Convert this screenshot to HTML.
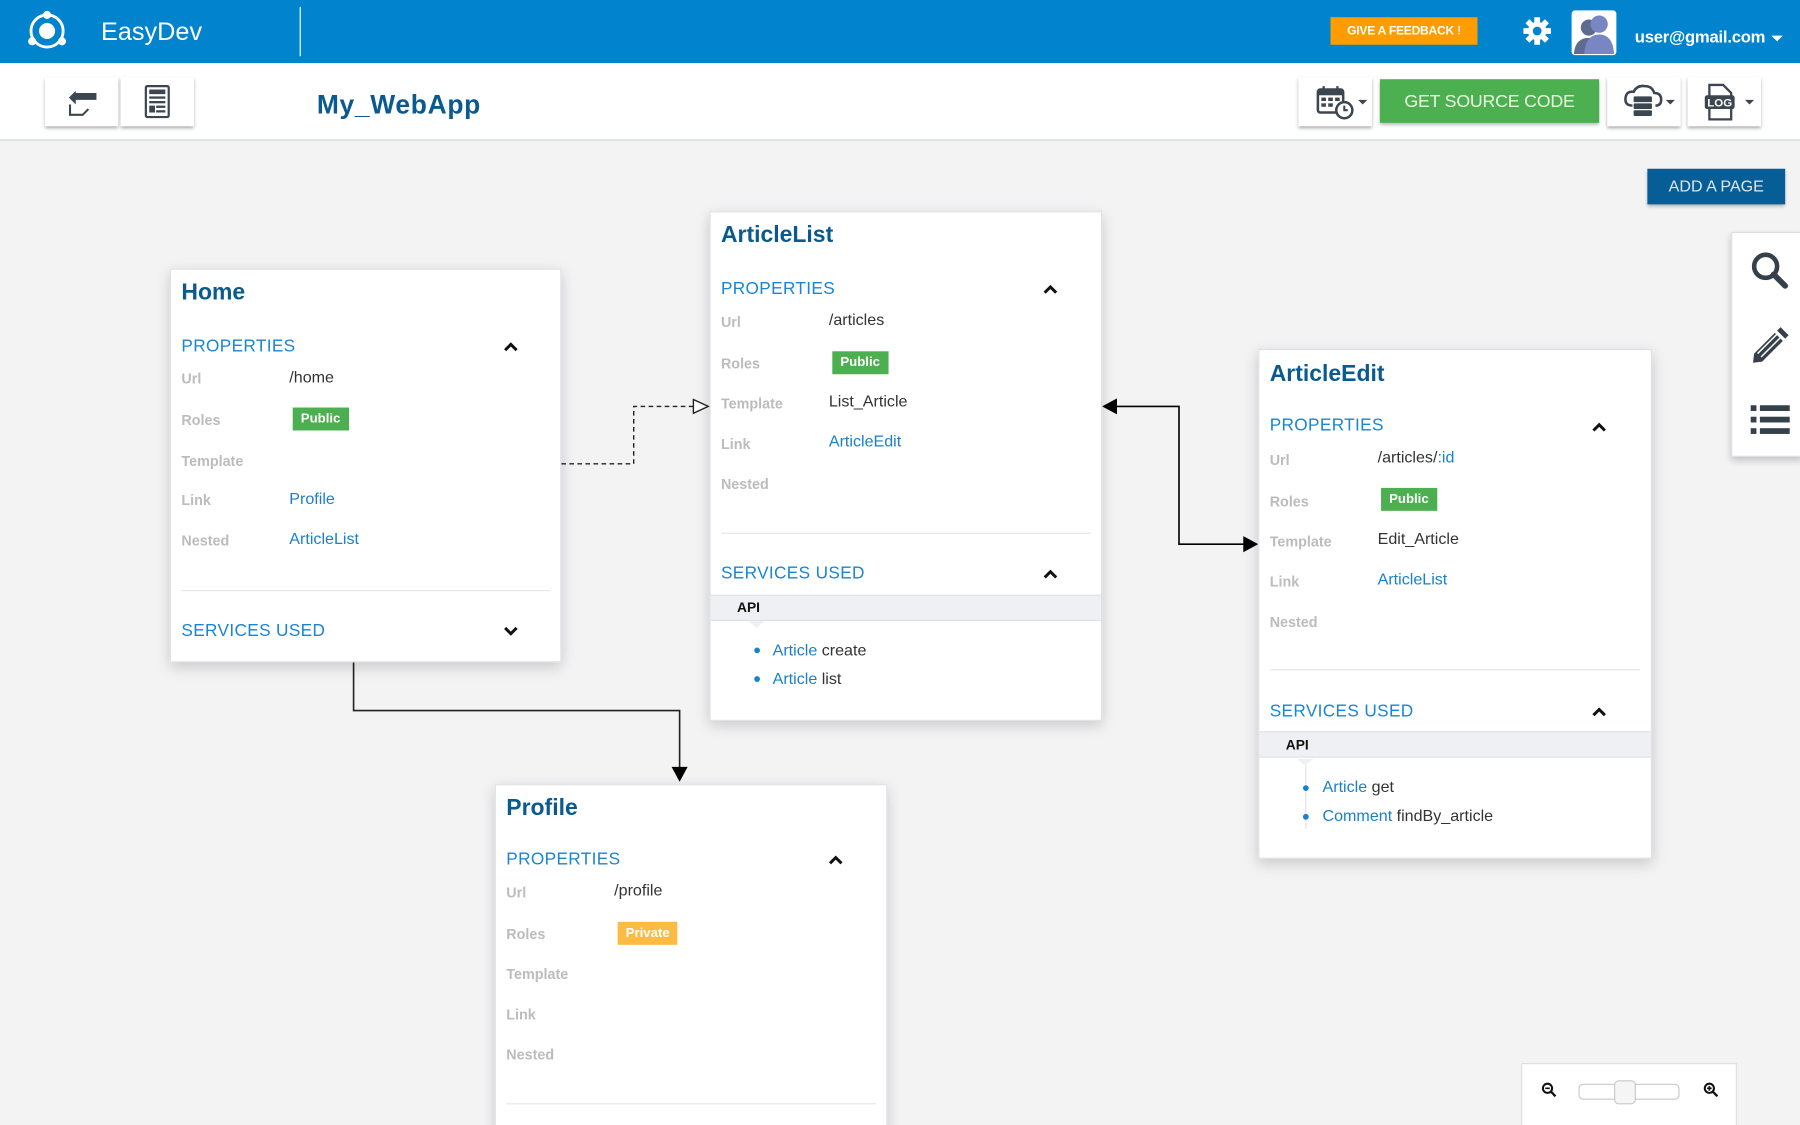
<!DOCTYPE html>
<html><head><meta charset="utf-8"><style>
*{margin:0;padding:0;box-sizing:border-box}
html,body{width:1800px;height:1125px;overflow:hidden;background:#f3f3f4}
#w{position:absolute;left:0;top:0;width:1568px;height:980px;transform:scale(1.148);transform-origin:0 0;font-family:"Liberation Sans",sans-serif;background:#f3f3f4;overflow:hidden}
.a{position:absolute}
.hdr{left:0;top:0;width:1568px;height:55px;background:#0283cd}
.tb{left:0;top:55px;width:1568px;height:68px;background:#fff;border-bottom:2px solid #e2e3e8}
.btn{background:#fff;box-shadow:0 2px 3px rgba(0,0,0,.35);}
.card{background:#fff;border:1px solid #e0e1e6;box-shadow:0 4px 12px rgba(0,0,0,.18)}
.t{font-size:20px;font-weight:bold;color:#0a5a8f;left:9px;line-height:24px}
.sec{font-size:15px;color:#1a85d0;left:9px;line-height:18px;letter-spacing:.3px}
.lb{font-size:12.5px;font-weight:bold;color:#bcbcbc;left:9px;line-height:16px}
.v{font-size:14px;color:#333;left:103px;line-height:18px}
.lk{color:#1a80cc}
.badge{font-size:11.5px;font-weight:bold;color:#fff;padding:0 7px;line-height:20px}
.div{left:9px;right:9px;height:1px;background:#e4e5ea}
.chev{width:14px;height:10px}
.api{left:0;right:0;height:23px;background:#eff0f4;border-top:1px solid #e0e1e6;border-bottom:1px solid #e0e1e6}
.li{font-size:14px;color:#333;line-height:18px}
.dot{width:5px;height:5px;border-radius:50%;background:#1a80cc}
</style></head><body><div id="w">

<div class="a hdr"></div>
<svg class="a" style="left:22px;top:8px" width="38" height="38" viewBox="0 0 38 38">
<circle cx="19" cy="19" r="14" fill="none" stroke="#fff" stroke-width="2.5"/>
<circle cx="19" cy="19" r="7" fill="#fff"/>
<circle cx="19" cy="5" r="3.5" fill="#fff"/><circle cx="6" cy="28" r="3.5" fill="#fff"/><circle cx="32" cy="28" r="3.5" fill="#fff"/>
</svg>
<div class="a" style="left:88px;top:15px;color:#fff;font-size:22px;line-height:26px">EasyDev</div>
<div class="a" style="left:261px;top:6px;width:1px;height:43px;background:#fff"></div>
<div class="a" style="left:1159px;top:15px;width:128px;height:24px;background:#fe9c00;color:#fff;font-size:10.5px;font-weight:bold;text-align:center;line-height:24px;letter-spacing:-.2px">GIVE A FEEDBACK !</div>
<svg class="a" style="left:1326px;top:14px" width="26" height="26" viewBox="0 0 26 26"><g fill="#fff"><circle cx="13" cy="13" r="8"/><g stroke="#fff" stroke-width="5"><line x1="13" y1="1" x2="13" y2="25"/><line x1="1" y1="13" x2="25" y2="13"/><line x1="4.5" y1="4.5" x2="21.5" y2="21.5"/><line x1="21.5" y1="4.5" x2="4.5" y2="21.5"/></g></g><circle cx="13" cy="13" r="3.8" fill="#0283cd"/></svg>
<div class="a" style="left:1369px;top:9px;width:39px;height:39px;background:#fff;border-radius:3px;overflow:hidden">
<svg width="39" height="39" viewBox="0 0 39 39"><circle cx="15" cy="15" r="7" fill="#5f6b8e"/><path d="M2 38 Q3 24 15 24 Q27 24 28 38Z" fill="#5f6b8e"/><circle cx="24" cy="12" r="7.5" fill="#7886c4"/><path d="M11 38 Q12 21 24 21 Q36 21 37 38Z" fill="#7886c4"/></svg></div>
<div class="a" style="left:1424px;top:23px;color:#fff;font-size:14.5px;font-weight:bold;line-height:20px;letter-spacing:-.2px">user@gmail.com</div>
<div class="a" style="left:1543px;top:31px;border:5px solid transparent;border-top:5px solid #fff"></div>

<div class="a tb"></div>
<div class="a btn" style="left:39px;top:67px;width:64px;height:43px"></div>
<svg class="a" style="left:58px;top:75px" width="28" height="28" viewBox="0 0 28 28"><path d="M8 4 L2 10 L8 16 V12 H26 V6 H8Z" fill="#3c4650"/><path d="M3 16 V25 H14 L19 20" fill="none" stroke="#3c4650" stroke-width="1.8"/></svg>
<div class="a btn" style="left:105px;top:67px;width:64px;height:43px"></div>
<svg class="a" style="left:126px;top:74px" width="22" height="29" viewBox="0 0 22 29"><rect x="1" y="1" width="20" height="27" rx="1.5" fill="none" stroke="#3c4650" stroke-width="2"/><rect x="4" y="4" width="14" height="4" fill="#3c4650"/><rect x="4" y="10" width="14" height="2" fill="#3c4650"/><rect x="4" y="14" width="14" height="2" fill="#3c4650"/><rect x="4" y="18" width="5" height="6" fill="#3c4650"/><rect x="10" y="18" width="8" height="2" fill="#3c4650"/><rect x="10" y="22" width="8" height="2" fill="#3c4650"/></svg>
<div class="a" style="left:276px;top:77px;font-size:23px;font-weight:bold;color:#0a5a8f;line-height:28px;letter-spacing:.6px">My_WebApp</div>

<div class="a btn" style="left:1131px;top:67px;width:64px;height:43px"></div>
<svg class="a" style="left:1146px;top:73px" width="48" height="32" viewBox="0 0 48 32"><rect x="2" y="5" width="22" height="20" rx="2" fill="none" stroke="#3c4650" stroke-width="2.2"/><rect x="2" y="5" width="22" height="5" fill="#3c4650"/><line x1="7" y1="2" x2="7" y2="7" stroke="#3c4650" stroke-width="2"/><line x1="19" y1="2" x2="19" y2="7" stroke="#3c4650" stroke-width="2"/><g fill="#3c4650"><rect x="5" y="12" width="4" height="3"/><rect x="11" y="12" width="4" height="3"/><rect x="17" y="12" width="4" height="3"/><rect x="5" y="17" width="4" height="3"/><rect x="11" y="17" width="4" height="3"/></g><circle cx="25" cy="23" r="7" fill="#fff" stroke="#3c4650" stroke-width="2.2"/><path d="M25 19 V23 H28" fill="none" stroke="#3c4650" stroke-width="1.8"/><path d="M37 14 L45 14 L41 18Z" fill="#3c4650"/></svg>
<div class="a" style="left:1202px;top:69px;width:191px;height:38px;background:#4cb050;box-shadow:0 2px 3px rgba(0,0,0,.3);color:#e9f5e0;font-size:15.5px;text-align:center;line-height:40px;letter-spacing:-.2px">GET SOURCE CODE</div>
<div class="a btn" style="left:1400px;top:67px;width:64px;height:43px"></div>
<svg class="a" style="left:1414px;top:72px" width="48" height="32" viewBox="0 0 48 32"><path d="M8 20 Q1 20 2 13 Q3 7 9 8 Q12 2 19 3 Q25 3 27 9 Q33 9 33 15 Q33 20 28 20" fill="none" stroke="#3c4650" stroke-width="2.2"/><g fill="#3c4650"><rect x="9" y="12" width="16" height="5" rx="1"/><rect x="9" y="18" width="16" height="5" rx="1"/><rect x="9" y="24" width="16" height="5" rx="1"/></g><path d="M37 15 L45 15 L41 19Z" fill="#3c4650"/></svg>
<div class="a btn" style="left:1470px;top:67px;width:64px;height:43px"></div>
<svg class="a" style="left:1484px;top:72px" width="48" height="34" viewBox="0 0 48 34"><path d="M5 2 H17 L24 9 V32 H5Z" fill="none" stroke="#3c4650" stroke-width="2"/><rect x="1" y="11" width="26" height="12" rx="2" fill="#3c4650"/><text x="14" y="21" font-family="Liberation Sans" font-weight="bold" font-size="10" fill="#fff" text-anchor="middle">LOG</text><path d="M36 15 L44 15 L40 19Z" fill="#3c4650"/></svg>

<div class="a" style="left:1435px;top:147px;width:120px;height:31px;background:#075d95;box-shadow:0 2px 3px rgba(0,0,0,.3);color:#dde8f2;font-size:14px;text-align:center;line-height:31px">ADD A PAGE</div>
<div class="a" style="left:1508px;top:202px;width:62px;height:196px;background:#fff;border:1px solid #dcdde3;box-shadow:0 3px 6px rgba(0,0,0,.2)"></div>
<svg class="a" style="left:1524px;top:218px" width="36" height="36" viewBox="0 0 36 36"><circle cx="14" cy="14" r="10" fill="none" stroke="#36404b" stroke-width="4"/><line x1="21" y1="21" x2="31" y2="31" stroke="#36404b" stroke-width="5" stroke-linecap="round"/></svg>
<svg class="a" style="left:1524px;top:282px" width="36" height="36" viewBox="0 0 36 36"><path d="M27 3 L34 10 L31 13 L24 6Z" fill="#36404b"/><path d="M22 8 L29 15 L11 33 L3 34 L4 26Z" fill="#36404b"/><path d="M7 26 L24 9 M10 29 L27 12" stroke="#fff" stroke-width="1.3"/></svg>
<svg class="a" style="left:1524px;top:352px" width="36" height="28" viewBox="0 0 36 28"><g fill="#36404b"><rect x="1" y="1" width="5" height="5"/><rect x="9" y="1" width="26" height="5"/><rect x="1" y="11" width="5" height="5"/><rect x="9" y="11" width="26" height="5"/><rect x="1" y="21" width="5" height="5"/><rect x="9" y="21" width="26" height="5"/></g></svg>

<div class="a" style="left:1325px;top:926px;width:188px;height:60px;background:#fff;border:1px solid #dcdde3"></div>
<svg class="a" style="left:1342px;top:942px" width="14" height="14" viewBox="0 0 14 14"><circle cx="6" cy="6" r="4" fill="none" stroke="#111" stroke-width="1.8"/><line x1="9" y1="9" x2="13" y2="13" stroke="#111" stroke-width="2"/><line x1="4" y1="6" x2="8" y2="6" stroke="#111" stroke-width="1.5"/></svg>
<div class="a" style="left:1375px;top:944px;width:88px;height:14px;border:1px solid #c9c9c9;border-radius:4px"></div>
<div class="a" style="left:1406px;top:941px;width:19px;height:21px;border:1px solid #c9c9c9;border-radius:4px;background:#f5f5f5"></div>
<svg class="a" style="left:1483px;top:942px" width="14" height="14" viewBox="0 0 14 14"><circle cx="6" cy="6" r="4" fill="none" stroke="#111" stroke-width="1.8"/><line x1="9" y1="9" x2="13" y2="13" stroke="#111" stroke-width="2"/><line x1="4" y1="6" x2="8" y2="6" stroke="#111" stroke-width="1.5"/><line x1="6" y1="4" x2="6" y2="8" stroke="#111" stroke-width="1.5"/></svg>

<svg class="a" style="left:0;top:0" width="1568" height="980">
<path d="M489 404 H552 V354 H606" fill="none" stroke="#222" stroke-width="1.2" stroke-dasharray="4,3"/>
<path d="M604 348 L617 354 L604 360Z" fill="#fff" stroke="#222" stroke-width="1.2"/>
<path d="M308 577 V619 H592 V670" fill="none" stroke="#222" stroke-width="1.4"/>
<path d="M585 668 L592 681 L599 668Z" fill="#000"/>
<path d="M972 354 H1027 V474 H1084" fill="none" stroke="#000" stroke-width="1.4"/>
<path d="M973 347 L960 354 L973 361Z" fill="#000"/>
<path d="M1083 467 L1096 474 L1083 481Z" fill="#000"/>
</svg>

<div class="a card" style="left:148px;top:234px;width:341px;height:343px">
<div class="a t" style="top:8px">Home</div>
<div class="a sec" style="top:58px">PROPERTIES</div>
<svg class="a chev" style="left:289px;top:62px" viewBox="0 0 14 10"><path d="M2 8 L7 3 L12 8" fill="none" stroke="#111" stroke-width="2.6"/></svg>
<div class="a lb" style="top:87px">Url</div><div class="a v" style="top:84px">/home</div>
<div class="a lb" style="top:123px">Roles</div><div class="a badge" style="left:106px;top:120px;background:#4cb050">Public</div>
<div class="a lb" style="top:159px">Template</div>
<div class="a lb" style="top:193px">Link</div><div class="a v lk" style="top:190px">Profile</div>
<div class="a lb" style="top:228px">Nested</div><div class="a v lk" style="top:225px">ArticleList</div>
<div class="a div" style="top:279px"></div>
<div class="a sec" style="top:306px">SERVICES USED</div>
<svg class="a chev" style="left:289px;top:310px" viewBox="0 0 14 10"><path d="M2 2 L7 7 L12 2" fill="none" stroke="#111" stroke-width="2.6"/></svg>
</div>

<div class="a card" style="left:618px;top:184px;width:342px;height:444px">
<div class="a t" style="top:8px">ArticleList</div>
<div class="a sec" style="top:58px">PROPERTIES</div>
<svg class="a chev" style="left:289px;top:62px" viewBox="0 0 14 10"><path d="M2 8 L7 3 L12 8" fill="none" stroke="#111" stroke-width="2.6"/></svg>
<div class="a lb" style="top:88px">Url</div><div class="a v" style="top:84px">/articles</div>
<div class="a lb" style="top:124px">Roles</div><div class="a badge" style="left:106px;top:121px;background:#4cb050">Public</div>
<div class="a lb" style="top:159px">Template</div><div class="a v" style="top:155px">List_Article</div>
<div class="a lb" style="top:194px">Link</div><div class="a v lk" style="top:190px">ArticleEdit</div>
<div class="a lb" style="top:229px">Nested</div>
<div class="a div" style="top:279px"></div>
<div class="a sec" style="top:306px">SERVICES USED</div>
<svg class="a chev" style="left:289px;top:310px" viewBox="0 0 14 10"><path d="M2 8 L7 3 L12 8" fill="none" stroke="#111" stroke-width="2.6"/></svg>
<div class="a api" style="top:333px"></div>
<div class="a" style="left:23px;top:336px;font-size:12px;font-weight:bold;color:#111;line-height:16px">API</div>
<div class="a" style="left:33px;top:356px;border:7px solid transparent;border-top:6px solid #eff0f4"></div>
<div class="a dot" style="left:38px;top:379px"></div><div class="a li" style="left:54px;top:372px"><span class="lk">Article</span> create</div>
<div class="a dot" style="left:38px;top:404px"></div><div class="a li" style="left:54px;top:397px"><span class="lk">Article</span> list</div>
</div>

<div class="a card" style="left:1096px;top:304px;width:343px;height:444px">
<div class="a t" style="top:9px">ArticleEdit</div>
<div class="a sec" style="top:57px">PROPERTIES</div>
<svg class="a chev" style="left:289px;top:62px" viewBox="0 0 14 10"><path d="M2 8 L7 3 L12 8" fill="none" stroke="#111" stroke-width="2.6"/></svg>
<div class="a lb" style="top:88px">Url</div><div class="a v" style="top:84px">/articles/<span class="lk">:id</span></div>
<div class="a lb" style="top:124px">Roles</div><div class="a badge" style="left:106px;top:120px;background:#4cb050">Public</div>
<div class="a lb" style="top:159px">Template</div><div class="a v" style="top:155px">Edit_Article</div>
<div class="a lb" style="top:194px">Link</div><div class="a v lk" style="top:190px">ArticleList</div>
<div class="a lb" style="top:229px">Nested</div>
<div class="a div" style="top:278px"></div>
<div class="a sec" style="top:306px">SERVICES USED</div>
<svg class="a chev" style="left:289px;top:310px" viewBox="0 0 14 10"><path d="M2 8 L7 3 L12 8" fill="none" stroke="#111" stroke-width="2.6"/></svg>
<div class="a api" style="top:332px"></div>
<div class="a" style="left:23px;top:336px;font-size:12px;font-weight:bold;color:#111;line-height:16px">API</div>
<div class="a" style="left:33px;top:356px;border:7px solid transparent;border-top:6px solid #eff0f4"></div>
<div class="a" style="left:40px;top:362px;width:1px;height:55px;background:#e2e3e8"></div>
<div class="a dot" style="left:38px;top:379px"></div><div class="a li" style="left:55px;top:371px"><span class="lk">Article</span> get</div>
<div class="a dot" style="left:38px;top:404px"></div><div class="a li" style="left:55px;top:396px"><span class="lk">Comment</span> findBy_article</div>
</div>

<div class="a card" style="left:431px;top:683px;width:342px;height:320px">
<div class="a t" style="top:8px">Profile</div>
<div class="a sec" style="top:56px">PROPERTIES</div>
<svg class="a chev" style="left:289px;top:60px" viewBox="0 0 14 10"><path d="M2 8 L7 3 L12 8" fill="none" stroke="#111" stroke-width="2.6"/></svg>
<div class="a lb" style="top:86px">Url</div><div class="a v" style="top:82px">/profile</div>
<div class="a lb" style="top:122px">Roles</div><div class="a badge" style="left:106px;top:119px;background:#fdbb44">Private</div>
<div class="a lb" style="top:157px">Template</div>
<div class="a lb" style="top:192px">Link</div>
<div class="a lb" style="top:227px">Nested</div>
<div class="a div" style="top:277px"></div>
</div>

</div></body></html>
